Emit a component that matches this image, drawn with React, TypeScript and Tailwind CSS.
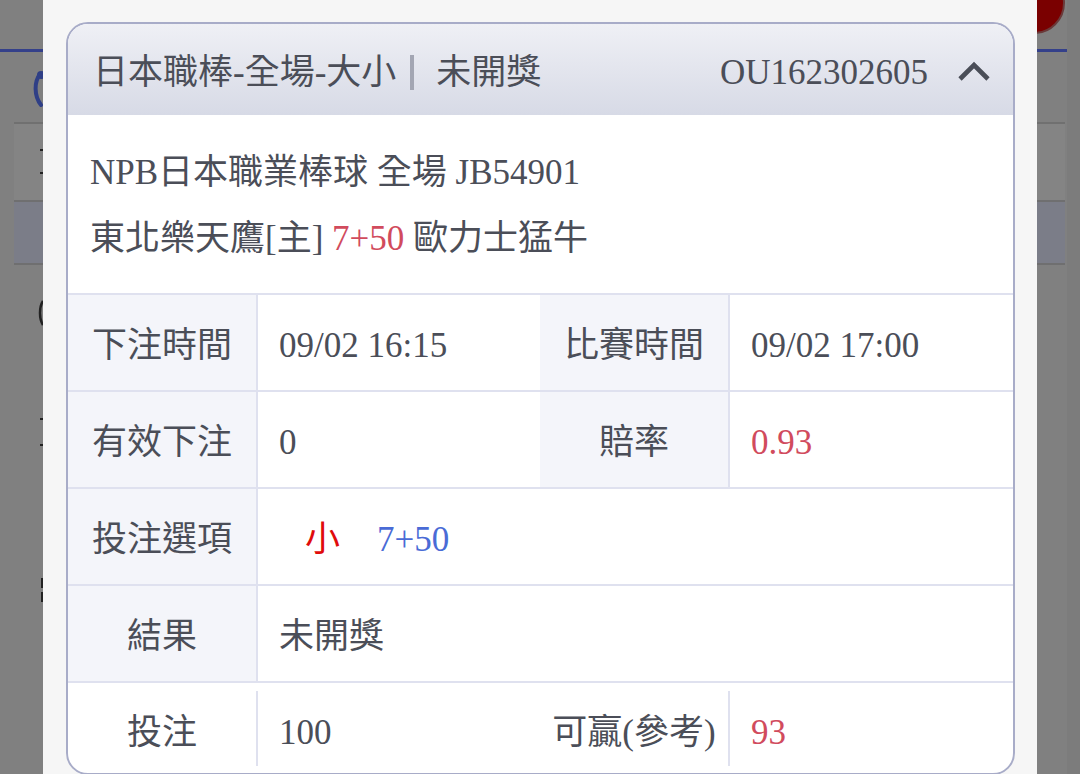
import React from "react";

const font = "font-['Liberation_Serif','Noto_Sans_CJK_TC',serif]";

function Chevron() {
  return (
    <svg width="34" height="22" viewBox="0 0 34 22" className="block">
      <polyline points="3,19 17,5 31,19" fill="none" stroke="#4a4e58" strokeWidth="4.6" strokeLinecap="butt" strokeLinejoin="miter" />
    </svg>
  );
}

function LeftStrip() {
  return (
    <div className="relative w-[43px] h-full bg-[#808080] overflow-hidden shrink-0">
      <div className="absolute left-0 top-[49px] w-full h-[3px] bg-[#34408a]" />
      <svg className="absolute left-[33px] top-[68px]" width="12" height="42" viewBox="0 0 12 42">
        <circle cx="8" cy="7" r="4" fill="#2f3f86" />
        <path d="M7 6 C1 14 1 28 8 37" fill="none" stroke="#2f3f86" strokeWidth="4" strokeLinecap="round" />
      </svg>
      <div className="absolute left-[14px] top-[122px] w-[29px] h-[78px] bg-[#848484] border-t-2 border-[#707070]" />
      <div className="absolute left-[14px] top-[200px] w-[29px] h-[65px] bg-[#7b7d88] border-t-2 border-[#6f6f70] border-b-2" />
      <div className="absolute left-[40px] top-[149px] w-[3px] h-[2px] bg-[#222]" />
      <div className="absolute left-[40px] top-[172px] w-[3px] h-[2px] bg-[#222]" />
      <svg className="absolute left-[38px] top-[300px]" width="6" height="26" viewBox="0 0 6 26">
        <path d="M5 1 C1 7 1 19 5 25" fill="none" stroke="#222" strokeWidth="2.5" />
      </svg>
      <div className="absolute left-[40px] top-[418px] w-[3px] h-[2px] bg-[#222]" />
      <div className="absolute left-[40px] top-[444px] w-[3px] h-[2px] bg-[#222]" />
      <div className="absolute left-[41px] top-[578px] w-[2px] h-[10px] bg-[#222]" />
      <div className="absolute left-[41px] top-[592px] w-[2px] h-[10px] bg-[#222]" />
    </div>
  );
}

function RightStrip() {
  return (
    <div className="relative w-[43px] h-full bg-[#808080] overflow-hidden shrink-0">
      <div className="absolute left-[-34px] top-[-28px] w-[62px] h-[62px] rounded-full bg-[#7a0000] border-[2px] border-[#6a3a3a]" />
      <div className="absolute left-0 top-[49px] w-full h-[3px] bg-[#34408a]" />
      <div className="absolute left-0 top-[122px] w-[28px] h-[78px] bg-[#848484] border-t-2 border-[#707070]" />
      <div className="absolute left-0 top-[200px] w-[28px] h-[65px] bg-[#7b7d88] border-t-2 border-b-2 border-[#6f6f70]" />
      <div className="absolute left-[30px] top-0 w-[13px] h-full bg-[#7c7c7c]" />
    </div>
  );
}

const rowCls = "flex border-t-2 border-[#dfe1ef]";
const labelCls = "w-[188px] shrink-0 bg-[#f4f5fa] flex items-center justify-center pt-[6px]";
const valueCls = "border-l-2 border-[#dfe1ef] flex items-center pl-[21px] pt-[6px]";

export default function App() {
  return (
    <div className={`w-[1080px] h-[774px] overflow-hidden flex bg-[#808080] ${font} text-[35px] text-[#4b4e58]`}>
      <LeftStrip />
      <div className="flex-1 h-full bg-[#f6f6f6] px-[23px] pt-[22px] overflow-hidden">
        <div className="w-[949px] border-2 border-[#a8acc8] rounded-[22px] overflow-hidden bg-white">
          {/* Header */}
          <div className="h-[91px] bg-gradient-to-b from-[#eff0f5] to-[#d7dae6] flex items-center pl-[25px] pr-[22px] pt-[6px]">
            <div className="flex items-center leading-none">
              <span>日本職棒-全場-大小</span>
              <span className="ml-[14px] mr-[22px] w-[4px] h-[35px] bg-[#a3a6b3]" />
              <span>未開獎</span>
            </div>
            <div className="ml-auto flex items-center leading-none">
              <span>OU162302605</span>
              <span className="ml-[29px] -mt-[4px]"><Chevron /></span>
            </div>
          </div>
          {/* Body */}
          <div className="pt-[25px] pb-[21px] pl-[22px] leading-[66px]">
            <div>NPB日本職業棒球 全場 JB54901</div>
            <div>
              東北樂天鷹[主] <span className="text-[#d14b5d]">7+50</span> 歐力士猛牛
            </div>
          </div>
          {/* Table */}
          <div className="leading-none">
            <div className={`${rowCls} h-[97px]`}>
              <div className={labelCls}>下注時間</div>
              <div className={`${valueCls} w-[284px]`}>09/02 16:15</div>
              <div className={labelCls}>比賽時間</div>
              <div className={`${valueCls} flex-1`}>09/02 17:00</div>
            </div>
            <div className={`${rowCls} h-[97px]`}>
              <div className={labelCls}>有效下注</div>
              <div className={`${valueCls} w-[284px]`}>0</div>
              <div className={labelCls}>賠率</div>
              <div className={`${valueCls} flex-1 text-[#d14b5d]`}>0.93</div>
            </div>
            <div className={`${rowCls} h-[97px]`}>
              <div className={labelCls}>投注選項</div>
              <div className={`${valueCls} flex-1`}>
                <span className="ml-[26px] text-[#e00b0b]">小</span>
                <span className="ml-[37px] text-[#4a6bd6]">7+50</span>
              </div>
            </div>
            <div className={`${rowCls} h-[97px]`}>
              <div className={labelCls}>結果</div>
              <div className={`${valueCls} flex-1`}>未開獎</div>
            </div>
            <div className={`${rowCls} h-[92px] items-center`}>
              <div className="w-[188px] shrink-0 flex items-center justify-center pt-[8px]">投注</div>
              <div className="w-[2px] h-[75px] bg-[#dfe1ef]" />
              <div className="w-[282px] pl-[21px] pt-[8px]">100</div>
              <div className="w-[188px] shrink-0 flex items-center justify-center pt-[8px]">可贏(參考)</div>
              <div className="w-[2px] h-[75px] bg-[#dfe1ef]" />
              <div className="flex-1 pl-[21px] pt-[8px] text-[#d14b5d]">93</div>
            </div>
          </div>
        </div>
      </div>
      <RightStrip />
    </div>
  );
}
